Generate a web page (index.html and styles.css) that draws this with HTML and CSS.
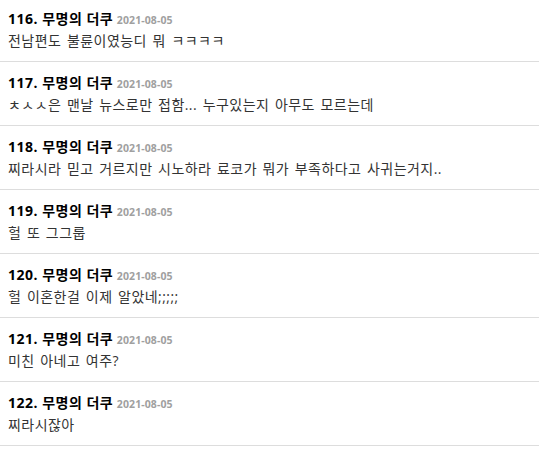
FILE: index.html
```html
<!DOCTYPE html>
<html lang="ko">
<head>
<meta charset="utf-8">
<title>댓글</title>
<link rel="stylesheet" href="styles.css">
</head>
<body>
<ul class="comments">
  <li class="comment">
    <div class="meta"><span class="name">116. 무명의 더쿠</span> <span class="date">2021-08-05</span></div>
    <div class="text">전남편도 불륜이였능디 뭐 ㅋㅋㅋㅋ</div>
  </li>
  <li class="comment">
    <div class="meta"><span class="name">117. 무명의 더쿠</span> <span class="date">2021-08-05</span></div>
    <div class="text">ㅊㅅㅅ은 맨날 뉴스로만 접함... 누구있는지 아무도 모르는데</div>
  </li>
  <li class="comment">
    <div class="meta"><span class="name">118. 무명의 더쿠</span> <span class="date">2021-08-05</span></div>
    <div class="text">찌라시라 믿고 거르지만 시노하라 료코가 뭐가 부족하다고 사귀는거지..</div>
  </li>
  <li class="comment">
    <div class="meta"><span class="name">119. 무명의 더쿠</span> <span class="date">2021-08-05</span></div>
    <div class="text">헐 또 그그룹</div>
  </li>
  <li class="comment">
    <div class="meta"><span class="name">120. 무명의 더쿠</span> <span class="date">2021-08-05</span></div>
    <div class="text">헐 이혼한걸 이제 알았네;;;;;</div>
  </li>
  <li class="comment">
    <div class="meta"><span class="name">121. 무명의 더쿠</span> <span class="date">2021-08-05</span></div>
    <div class="text">미친 아네고 여주?</div>
  </li>
  <li class="comment">
    <div class="meta"><span class="name">122. 무명의 더쿠</span> <span class="date">2021-08-05</span></div>
    <div class="text">찌라시잖아</div>
  </li>
</ul>
</body>
</html>
```

FILE: styles.css
```css
html, body {
  margin: 0;
  padding: 0;
  background: #ffffff;
}

body {
  font-family: "Open Sans", "Noto Sans CJK KR", sans-serif;
  font-size: 14px;
  color: #333333;
}

.comments {
  list-style: none;
  margin: -2px 0 0 0;
  padding: 0;
}

.comment {
  padding: 12px 8px 11px 8px;
  border-bottom: 1px solid #dddddd;
}

.meta {
  height: 18px;
  line-height: 18px;
  white-space: nowrap;
}

.name {
  font-weight: 700;
  color: #000000;
  letter-spacing: 0.5px;
}

.date {
  font-weight: 700;
  color: #a0a0a0;
  font-size: 10.5px;
  letter-spacing: 0.1px;
}

.text {
  margin-top: 4px;
  height: 18px;
  line-height: 18px;
  letter-spacing: 0.45px;
  word-spacing: 1.5px;
  white-space: nowrap;
  color: #333333;
}
```
